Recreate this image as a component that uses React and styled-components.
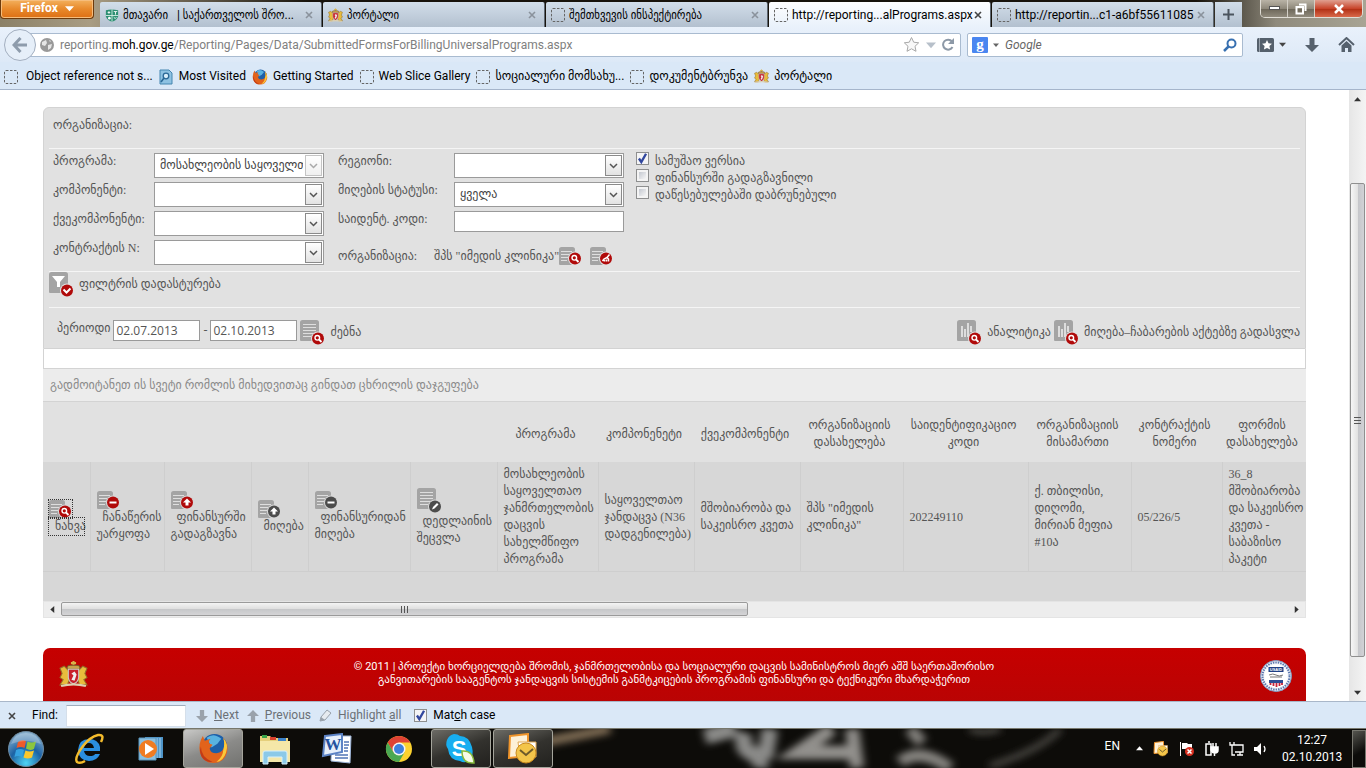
import React from 'react'

import styled, { createGlobalStyle } from 'styled-components';

const GlobalStyle = createGlobalStyle`
  *{
    box-sizing:border-box;
  }
  body{
    margin:0;
    background-color:#fff;
  }
  button,input,select{
    font:inherit;
    color:inherit;
    margin:0;
  }
  button{
    padding:0;
    border:0;
    background:none;
    cursor:pointer;
  }
  svg{
    display:block;
    flex:none;
  }
`;

const uiFont = `Roboto,"DejaVu Sans",sans-serif`;
const tabFont = `Roboto,"DejaVu Sans Condensed",sans-serif`;
const pageFont = `"Liberation Serif","DejaVu Sans",serif`;

const Screen=styled.div`
  display:flex;
  flex-direction:column;
  height:100vh;
  overflow:hidden;
  font-family:${uiFont};
  font-size:12px;
  line-height:17px;
  color:#000;
  white-space:nowrap;
`;

/* ---------- browser top ---------- */

const TitleBar=styled.header`
  flex:none;
  display:flex;
  align-items:flex-start;
  height:27px;
  background:
    linear-gradient(90deg,#8b8067 0,#a99d84 90px,transparent 310px),
    linear-gradient(270deg,#a8a494 0,#8f8a7c 90px,transparent 170px),
    #17130c;
`;

const FirefoxButton=styled.button`
  width:94px;
  height:19px;
  margin-right:6px;
  padding-bottom:2px;
  border:1px solid #6d3a0b;
  border-top:0;
  border-radius:0 0 4px 4px;
  background:linear-gradient(#f3b05d,#e8892b 50%,#dd6f14);
  box-shadow:inset 0 0 0 1px #f6bd7c;
  color:#fff;
  font-weight:bold;
  line-height:16px;
  display:flex;
  align-items:center;
  justify-content:center;
  gap:7px;
`;

const Tabs=styled.nav`
  flex:1;
  display:flex;
  gap:1px;
  padding-top:2px;
  min-width:0;
  font-family:${tabFont};
`;

const Tab=styled.div`
  flex:0 1 222px;
  height:25px;
  min-width:0;
  display:flex;
  align-items:center;
  padding:1px 6px 0 5px;
  border-radius:2px 2px 0 0;
  border-right:1px solid #5d6670;
  background:${({active}) => active ? 'linear-gradient(#fdfeff,#e9f1fb)' : 'linear-gradient(#d2deea,#b3c0cf)'};
`;

const TabTitle=styled.button`
  flex:1;
  min-width:0;
  display:flex;
  align-items:center;
  gap:4px;
  text-align:left;
  overflow:hidden;
  white-space:pre;
`;

const TabClose=styled.button`
  width:10px;
  height:10px;
`;

const NewTab=styled.button`
  width:27px;
  height:25px;
  display:flex;
  align-items:center;
  justify-content:center;
  background:linear-gradient(#d2deea,#b3c0cf);
`;

const WindowButtons=styled.div`
  display:flex;
  height:18px;
  margin-right:3px;
  border:1px solid #e0ddd5;
  border-top:0;
  border-radius:0 0 5px 5px;
  overflow:hidden;
`;

const WindowButton=styled.button`
  width:${({close}) => close ? 47 : 27}px;
  display:flex;
  align-items:center;
  justify-content:center;
  border-right:${({close}) => close ? 0 : '1px solid #d3cfc6'};
  background:${({close}) => close ? 'linear-gradient(#e0a090,#c8452b 50%,#b02d12 51%,#d8694a)' : 'linear-gradient(#b9b3a6,#8f897b 50%,#6b6557 51%,#918b7d)'};
`;

const NavBar=styled.div`
  flex:none;
  display:flex;
  align-items:center;
  height:35px;
  padding:0 11px 0 4px;
  background:linear-gradient(#e9f1fb,#dde9f7);
`;

const BackButton=styled.button`
  position:relative;
  width:32px;
  height:32px;
  border-radius:50%;
  border:1px solid #a3afc0;
  background:#e6eff9;
  display:flex;
  align-items:center;
  justify-content:center;
`;

const UrlBar=styled.div`
  flex:1;
  display:flex;
  align-items:center;
  gap:6px;
  height:24px;
  margin-left:-8px;
  padding:0 5px 0 11px;
  border:1px solid #a9bbd0;
  border-radius:2px;
  background:#fff;
`;

const UrlText=styled.div`
  flex:1;
  padding-top:2px;
  color:#808080;
  b{
    font-weight:normal;
    color:#000;
  }
`;

const SearchBar=styled.div`
  display:flex;
  align-items:center;
  width:276px;
  height:24px;
  margin:0 14px 0 6px;
  padding:0 5px 0 4px;
  border:1px solid #a9bbd0;
  border-radius:2px;
  background:#fff;
  gap:5px;
`;

const SearchInput=styled.input`
  flex:1;
  min-width:0;
  border:0;
  outline:0;
  padding:2px 0 0 1px;
  background:none;
  &::placeholder{
    color:#666;
    font-style:italic;
    opacity:1;
  }
`;

const NavIcons=styled.div`
  display:flex;
  align-items:center;
  gap:19px;
`;

const IconButton=styled.button`
  display:flex;
  align-items:center;
  gap:5px;
`;

const Bookmarks=styled.nav`
  flex:none;
  display:flex;
  align-items:center;
  gap:6px;
  height:28px;
  padding:2px 4px 0;
  background:#dae8f7;
  border-bottom:1px solid #a5b5cb;
`;

const Bookmark=styled.a`
  display:flex;
  align-items:center;
  gap:${({wide}) => wide ? 8 : 5}px;
  color:#000;
  text-decoration:none;
`;

/* ---------- page ---------- */

const Viewport=styled.div`
  flex:1;
  min-height:0;
  display:flex;
  background:#fff;
`;

const Page=styled.main`
  flex:1;
  min-width:0;
  overflow:hidden;
  padding:17px 43px 0;
  font-family:${pageFont};
  color:#555;
`;

const FilterPanel=styled.section`
  padding:0 5px;
  border:1px solid #d3d3d3;
  border-radius:6px 6px 0 0;
  background:#e1e1e1;
`;

const PanelRow=styled.div`
  display:flex;
  border-bottom:${({last}) => last ? 0 : '1px solid #f5f5f5'};
`;

const Heading=styled.div`
  height:40px;
  padding:9px 4px;
`;

const Filters=styled.form`
  display:flex;
  height:122px;
  padding:4px 4px 0;
`;

const Fields=styled.div`
  display:grid;
  grid-template-columns:${({label}) => label}px 170px;
  grid-auto-rows:25px;
  gap:4px 0;
  margin-right:${({gap}) => gap}px;
`;

const FieldLabel=styled.label`
  line-height:16px;
`;

const SelectBox=styled.div`
  position:relative;
  height:25px;
`;

const Select=styled.select`
  width:100%;
  height:25px;
  padding:0 20px 0 5px;
  appearance:none;
  border:1px solid #9a9a9a;
  border-radius:0;
  background:#fff;
  color:#444;
  opacity:1;
`;

const SelectArrow=styled.span`
  position:absolute;
  top:2px;
  right:2px;
  width:17px;
  height:21px;
  display:flex;
  align-items:center;
  justify-content:center;
  border:1px solid #8a8a8a;
  background:linear-gradient(#fff,#e2e2e2);
  opacity:${({off}) => off ? 0.5 : 1};
  pointer-events:none;
`;

const TextInput=styled.input`
  width:${({date}) => date ? '87px' : '100%'};
  height:21px;
  padding:0 2px;
  border:1px solid #9a9a9a;
  border-radius:0;
  background:#fff;
  font-family:"Open Sans",sans-serif;
`;

const OrgRow=styled.div`
  grid-column:1 / 3;
  display:flex;
  align-items:center;
  padding-top:7px;
`;

const OrgLabel=styled.span`
  width:96px;
`;

const OrgIcons=styled.div`
  display:flex;
  gap:8px;
`;

const Checks=styled.div`
  display:flex;
  flex-direction:column;
  margin-top:-1px;
`;

const CheckLabel=styled.label`
  display:flex;
  gap:6px;
  height:17px;
  line-height:19px;
`;

const CheckBox=styled.input`
  flex:none;
  appearance:none;
  width:13px;
  height:13px;
  border:1px solid #8e8f8f;
  background:linear-gradient(135deg,#c4c8d0,#f6f6f6) content-box,#f4f4f4;
  padding:2px;
  &:checked{
    background:url("data:image/svg+xml,%3Csvg xmlns='http://www.w3.org/2000/svg' viewBox='0 0 11 11'%3E%3Cpath d='M2.5 5.5 4.5 8.5 8.5 1.5' fill='none' stroke='%2331479e' stroke-width='2'/%3E%3C/svg%3E") border-box #f4f4f6;
  }
`;

const Confirm=styled.div`
  height:35px;
`;

const ActionButton=styled.button`
  display:flex;
  align-items:center;
  gap:5px;
`;

const SearchRow=styled.form`
  flex:1;
  display:flex;
  align-items:flex-start;
  height:40px;
  padding:12px 0 0 8px;
  gap:3px;
`;

const Dash=styled.span`
  line-height:21px;
`;

const Spacer=styled.div`
  flex:1;
`;

const WhiteStrip=styled.div`
  height:20px;
  border:1px solid #d3d3d3;
  border-top:0;
  background:#fff;
`;

const GroupPanel=styled.div`
  height:33px;
  padding:8px 7px;
  border-bottom:1px solid #d3d3d3;
  background:#ececec;
  color:#8a8a8a;
`;

const Grid=styled.div`
  overflow:hidden;
  background:#d7d7d7;
  padding-bottom:29px;
`;

const Table=styled.table`
  width:100%;
  table-layout:fixed;
  border-collapse:collapse;
`;

const Th=styled.th`
  height:60px;
  padding:4px 4px 0 0;
  background:#e1e1e1;
  font-weight:normal;
`;

const Td=styled.td`
  height:109px;
  padding:2px 0 0 6px;
  border-right:1px solid #cecece;
  border-bottom:1px solid #cecece;
  &:last-child{
    border-right:0;
  }
`;

const RowAction=styled.a`
  display:block;
  color:inherit;
  text-decoration:none;
`;

const ActionText=styled.span`
  display:block;
  text-indent:6px;
  width:${({focused}) => focused ? '35px' : 'auto'};
  outline:${({focused}) => focused ? '1px dotted #333' : 'none'};
`;

const ActionIcon=styled.span`
  display:block;
  width:23px;
  outline:${({focused}) => focused ? '1px dotted #333' : 'none'};
`;

const HScroll=styled.div`
  display:flex;
  align-items:center;
  height:17px;
  padding:0 5px;
  border:1px solid #e4e4e4;
  background:#ededed;
`;

const HTrack=styled.div`
  flex:1;
  margin:0 5px;
`;

const HThumb=styled.div`
  width:56%;
  height:14px;
  display:flex;
  align-items:center;
  justify-content:center;
  border:1px solid #9a9a9a;
  border-radius:2px;
  background:linear-gradient(#f4f4f4,#dedede 50%,#c6c7c9 51%,#d4d4d6);
`;

const PageFooter=styled.footer`
  display:flex;
  justify-content:space-between;
  height:60px;
  margin-top:30px;
  padding:12px 14px 0 16px;
  border-radius:7px 7px 0 0;
  background:linear-gradient(#c60000,#b80404);
  color:#fff;
  text-align:center;
  font-family:${uiFont};
  font-size:11px;
  line-height:13px;
`;

const VScroll=styled.div`
  width:17px;
  display:flex;
  flex-direction:column;
  align-items:center;
  padding:6px 0 5px;
  background:linear-gradient(90deg,#e6e6e6,#f4f4f4);
`;

const VThumb=styled.div`
  width:15px;
  height:79%;
  margin-top:80px;
  margin-bottom:auto;
  display:flex;
  align-items:center;
  justify-content:center;
  border:1px solid #8f8f8f;
  border-radius:2px;
  background:linear-gradient(90deg,#f6f6f6,#e2e2e2 50%,#c4c5c9 51%,#d2d2d6);
`;

/* ---------- find bar and taskbar ---------- */

const FindBar=styled.div`
  flex:none;
  display:flex;
  align-items:center;
  height:27px;
  padding:1px 0 0 8px;
  border-top:1px solid #a9b7c9;
  background:#dae8f7;
`;

const FindLabel=styled.label`
  width:50px;
  padding-left:16px;
`;

const FindInput=styled.input`
  width:120px;
  height:22px;
  margin-right:10px;
  border:1px solid #d5dfea;
  border-top-color:#9fadbd;
  background:#fff;
`;

const FindButton=styled.button`
  display:flex;
  align-items:center;
  gap:6px;
  margin-right:8px;
  color:#6b7076;
`;

const FindCheck=styled.label`
  display:flex;
  align-items:center;
  gap:6px;
  margin-left:5px;
`;

const TaskBar=styled.footer`
  flex:none;
  position:relative;
  display:flex;
  height:40px;
  border-top:1px solid #77776c;
  background:#0d0c09;
  color:#fff;
`;

const Wallpaper=styled.svg`
  position:absolute;
  left:0;
  top:0;
  width:100%;
  height:100%;
`;

const TaskItems=styled.div`
  position:relative;
  display:flex;
  gap:2px;
  flex:1;
`;

const StartButton=styled.button`
  width:57px;
  padding-left:7px;
`;

const TaskButton=styled.button`
  width:60px;
  height:39px;
  display:flex;
  align-items:center;
  justify-content:center;
  border-radius:3px;
  border:1px solid ${({state}) => state ? '#a5a59c' : 'transparent'};
  background:${({state}) => state === 'active' ? 'linear-gradient(160deg,#c8c8c6,#8b8b89 50%,#72726f)' : state === 'open' ? 'linear-gradient(160deg,#6c6b65,#33322e 50%,#22211e)' : 'none'};
`;

const Tray=styled.div`
  position:relative;
  display:flex;
  align-items:center;
  gap:10px;
`;

const Lang=styled.span`
  margin-right:6px;
  padding-bottom:4px;
`;

const Clock=styled.time`
  width:60px;
  margin-left:5px;
  text-align:center;
`;

const ShowDesktop=styled.button`
  width:14px;
  height:38px;
  border:1px solid #77776f;
  background:linear-gradient(150deg,#55554f,#0c0c0a 60%);
`;

/* ---------- icons ---------- */

const EmptyIcon = () => (
  <svg width="14" height="14" viewBox="0 0 14 14">
    <rect x="0.5" y="0.5" width="13" height="13" rx="1.5" fill="none" stroke="#666" strokeDasharray="2.5 1.5" />
  </svg>
)

const ArmsIcon = ({ size = 15 }) => (
  <svg width={size} height={size} viewBox="0 0 28 26">
    <path d="M14 0v5M11.500 2h5" stroke="#d9b24a" strokeWidth="2" />
    <path d="M8 8q-1-4 3-4h6q4 0 3 4z" fill="#c9a24a" stroke="#76542a" />
    <path d="M1 7l4-2 4 4 1 9-2 5H1l3-5-3-2 2-4z" fill="#e8bc3c" stroke="#94702c" />
    <path d="M27 7l-4-2-4 4-1 9 2 5h7l-3-5 3-2-2-4z" fill="#e8bc3c" stroke="#94702c" />
    <path d="M9 8h10v8q-1 5-5 6-4-1-5-6z" fill="#c8202a" stroke="#ccc" />
    <path d="M12 18l2-4-2-2 3-2 2 3-2 6z" fill="#eee" />
    <path d="M2 24q12-3 24 0" fill="none" stroke="#ddd0b0" strokeWidth="2" />
  </svg>
)

const MinistryIcon = () => (
  <svg width="14" height="15" viewBox="0 0 16 16">
    <path d="M1 2q6-2 14 0v7q-2 5-7 6-5-1-7-6z" fill="#2c8f72" />
    <path d="M8 1v14M1 8h14" stroke="#d7efe6" />
    <path d="M3 4.500h3M4.500 3v3M10 3.500h4M12 4v3" stroke="#fff" />
    <circle cx="5" cy="11" r="1.500" fill="#fff" />
    <path d="M10 10q2 3 3 0" stroke="#fff" fill="none" />
  </svg>
)

const FirefoxIcon = ({ size }) => (
  <svg width={size} height={size} viewBox="0 0 32 32">
    <circle cx="17" cy="14" r="13" fill="#1d5fa8" />
    <path d="M9 5q7-6 15 1l-4 5-6 4z" fill="#59b2e0" />
    <path d="M26 5q6 7 4 15-3 11-14 11Q5 31 2 20 0 11 5 3l2 5 6-2q-3 3-1 5l3 1-3 4q1 5 7 5 7-1 8-7 1-5-1-9z" fill="#e2631b" />
    <path d="M26 5q6 7 3 15-3 9-10 10 7-6 7-12 2-7 0-13z" fill="#fbc93a" />
    <path d="M3 14q0 11 12 16Q3 30 2 18z" fill="#c23b17" />
  </svg>
)

const MostVisitedIcon = () => (
  <svg width="15" height="16" viewBox="0 0 15 16">
    <path d="M1 1h9l3 3v11H1z" fill="#8ec2e2" stroke="#4586b0" />
    <circle cx="7" cy="7" r="2.800" fill="#d8eefa" stroke="#2a6896" strokeWidth="1.300" />
    <path d="M5 9l-3 4" stroke="#2a6896" strokeWidth="1.600" />
  </svg>
)

const CloseIcon = ({ color = '#8a929c' }) => (
  <svg width="8" height="8" viewBox="0 0 8 8">
    <path d="M1 1l6 6M7 1L1 7" stroke={color} strokeWidth="1.600" />
  </svg>
)

const Triangle = ({ dir = 'down', color = '#333', w = 7 }) => {
  const turn = { down: 0, up: 180, left: 90, right: 270 }
  return (
    <svg width={w} height={w} viewBox="0 0 8 8">
      <path d="M0 2h8L4 6.500z" fill={color} transform={`rotate(${turn[dir]} 4 4)`} />
    </svg>
  )
}

const ArrowIcon = ({ up, color = '#9aa2ab', size = 14 }) => (
  <svg width={size} height={size} viewBox="0 0 14 14">
    <path d="M4.500 0h5v7H14l-7 7-7-7h4.500z" fill={color} transform={up ? 'rotate(180 7 7)' : undefined} />
  </svg>
)

const glyphs = {
  search: <g fill="none" stroke="#fff"><circle cx="-0.700" cy="-0.700" r="2.300" strokeWidth="1.400" /><path d="M1 1l2.500 2.500" strokeWidth="1.800" /></g>,
  clear: <path d="M3.500-4L1-1M-3.500 2.500L-2 .5 1-1l1.500 1.500V3M.5 1v2M-1.500 1.500V3" fill="none" stroke="#fff" strokeWidth="1.500" />,
  minus: <path d="M-3.500 0h7" stroke="#fff" strokeWidth="2" />,
  up: <path d="M0-4l4 4H1.500v3h-3V0H-4z" fill="#fff" />,
  check: <path d="M-3.500-1L-.5 2l4-4" fill="none" stroke="#fff" strokeWidth="2" />,
  edit: <path d="M-3 3l1-2.500L2-3.500 3.500-2-.5 2z" fill="#fff" />,
}

const DocIcon = ({ kind = 'doc', badge, color = '#b00a0a', big, bg = '#e1e1e1' }) => {
  const [w, h] = big ? [25, 25] : [23, 18]
  const dh = big ? 21 : 18
  const dw = big ? 19 : 16
  const [cx, cy] = big ? [18, 18.500] : [16, 11.500]
  return (
    <svg width={w} height={h} viewBox={`0 0 ${w} ${h}`}>
      <path d={`M2.500 0H${dw - 2.500}q2.500 0 2.500 2.500V${dh - 1}q0 1-1 1H1q-1 0-1-1V2.500Q0 0 2.500 0z`} fill="#a4a4a4" />
      {kind === 'doc' && <path d={big ? 'M3 4.500h13M3 7.500h13M3 10.500h13M3 13.500h10M3 16.500h8' : 'M2 4.500h11M2 7.500h8M2 10.500h7M2 13.500h6'} stroke="#dedede" />}
      {kind === 'chart' && <path d="M5 6v11M8 9v8M11 3v14M14 6v6" stroke="#efefef" strokeWidth="1.500" />}
      {kind === 'filter' && <path d="M3 4h13l-5 6v5H8v-5z" fill="#fff" />}
      <circle cx={cx} cy={cy} r="7" fill={bg} />
      <circle cx={cx} cy={cy} r="6" fill={color} />
      <g transform={`translate(${cx} ${cy})`}>{glyphs[badge]}</g>
    </svg>
  )
}

const UsaidIcon = () => (
  <svg width="32" height="32" viewBox="0 0 32 32">
    <circle cx="16" cy="16" r="15.500" fill="#f4f6fa" stroke="#7f95bd" />
    <circle cx="16" cy="16" r="13.500" fill="none" stroke="#5c78ae" strokeWidth="2" strokeDasharray="1.500 1" />
    <circle cx="16" cy="16" r="11.500" fill="#fff" />
    <path d="M8.500 7h15v5h-15z" fill="#1f3f83" />
    <text x="16" y="11" fontFamily="Liberation Sans" fontSize="4" fontWeight="bold" textAnchor="middle" fill="#fff">USAID</text>
    <path d="M9 15q4-2 7 0t7 0M10 17h12" fill="none" stroke="#777" />
    <path d="M9 20h14v3H9z" fill="#2c4c93" />
    <path d="M10.500 23v2M13.500 23v3M16.500 23v4M19.500 23v3M22 23v2" stroke="#c8233a" strokeWidth="1.800" />
  </svg>
)

const Grip = ({ vertical }) => (
  <svg width="9" height="9" viewBox="0 0 9 9">
    <path d="M1.500 1v7M4.500 1v7M7.500 1v7" stroke="#555" transform={vertical ? 'rotate(90 4.500 4.500)' : undefined} />
  </svg>
)

const Orb = () => (
  <svg width="38" height="38" viewBox="0 0 38 38">
    <defs>
      <radialGradient id="orb" cx="0.5" cy="0.9" r="0.9">
        <stop offset="0" stopColor="#4fd4f4" />
        <stop offset="0.5" stopColor="#1c62a4" />
        <stop offset="1" stopColor="#8db4d0" />
      </radialGradient>
    </defs>
    <circle cx="19" cy="19" r="17.500" fill="url(#orb)" stroke="#6e8ba0" />
    <path d="M11 12q4-3 8-1l-1.500 7q-4-2-8 0z" fill="#ee5a2a" />
    <path d="M20.500 11.500q4 2 8.500 0l-2 7.500q-4 2-8-.5z" fill="#8cc63f" />
    <path d="M9 20q4-2 8 0l-2 7q-4-2-7.500 0z" fill="#36a2e0" />
    <path d="M18.500 20.500q4 2 8.500 0l-2 7q-4 2-8.500 0z" fill="#fcc82c" />
    <path d="M4 14Q8 3 19 3t15 11q-15-6-30 0z" fill="#fff" opacity="0.25" />
  </svg>
)

const IeIcon = () => (
  <svg width="34" height="34" viewBox="0 0 34 34">
    <path d="M17 7q9 0 11 8v4H12q1 5 6 5 4 0 5-2h5q-3 7-11 7-10 0-11-11Q7 7 17 7zm-5 9h10q-1-5-5-5t-5 5z" fill="#2a8ee0" />
    <path d="M29 10q4-8-3-7-8 2-15 11Q2 26 5 30q3 2 8-1" fill="none" stroke="#f3bb2c" strokeWidth="2.500" />
  </svg>
)

const MediaIcon = () => (
  <svg width="28" height="28" viewBox="0 0 28 28">
    <path d="M8 2h18v21H8z" fill="#4e95c8" />
    <path d="M23 3v20M20 3v20" stroke="#a7d2ee" />
    <path d="M2 3h17v22H2z" fill="#8bc0e0" stroke="#5a96be" />
    <circle cx="11" cy="14" r="9" fill="#f07c22" />
    <path d="M8 8l9 6-9 6z" fill="#fff" />
  </svg>
)

const ExplorerIcon = () => (
  <svg width="34" height="32" viewBox="0 0 34 32">
    <path d="M2 3h10l2 2h16v23H2z" fill="#e5cf7c" />
    <path d="M4 2h5v3H4z" fill="#3aa54a" />
    <path d="M12 4h6v3h-6z" fill="#d8402c" />
    <path d="M20 5h8v3h-8z" fill="#3c82c8" />
    <path d="M2 8h30v21H2z" fill="#f5e7a8" />
    <path d="M5 31V20q0-2 2-2h20q2 0 2 2v11h-5v-7H10v7z" fill="#8cc9e8" stroke="#d8f0fb" />
  </svg>
)

const WordIcon = () => (
  <svg width="32" height="32" viewBox="0 0 32 32">
    <path d="M11 3h19l-1 27-19-2z" fill="#fff" stroke="#9db5d8" />
    <path d="M14 22h13M14 25h13M23 9h5M23 12h5M23 15h4M23 18h4" stroke="#5276b5" strokeWidth="1.500" />
    <path d="M4 3L21 1v18L2 23z" fill="#e6effa" stroke="#5c83c5" strokeWidth="2" />
    <text x="12" y="17" fontFamily="Liberation Serif" fontSize="17" fontWeight="bold" textAnchor="middle" fill="#24529f">W</text>
  </svg>
)

const ChromeIcon = () => (
  <svg width="28" height="28" viewBox="0 0 28 28">
    <circle cx="14" cy="14" r="13" fill="#fcd22f" />
    <path d="M2.700 7.500A13 13 0 0 1 25.300 7.500H14L8.400 17.200z" fill="#df4234" />
    <path d="M2.700 7.500A13 13 0 0 0 14 27l5.600-9.800H8.400z" fill="#4aa853" />
    <circle cx="14" cy="14" r="6.500" fill="#f4f4f4" />
    <circle cx="14" cy="14" r="5" fill="#3f80dd" />
  </svg>
)

const SkypeIcon = () => (
  <svg width="32" height="32" viewBox="0 0 32 32">
    <path d="M9 1q4 0 6 2 9 0 12 11 2 8-2 13-5 4-10 1Q4 27 3 16 0 12 2 7q2-5 7-6z" fill="#18aef0" />
    <text x="14" y="23" fontFamily="Liberation Sans" fontSize="22" fontWeight="bold" textAnchor="middle" fill="#fff">S</text>
    <path d="M17 18q11-1 12 12-12 1-12-12z" fill="#f6fbe8" stroke="#86b93a" strokeWidth="1.500" />
  </svg>
)

const OutlookIcon = ({ size = 32 }) => (
  <svg width={size} height={size} viewBox="0 0 32 32">
    <path d="M3 3l18-2v22L2 25z" fill="#fdf1d8" stroke="#f0952b" strokeWidth="2" />
    <path d="M11 9h18v15H13z" fill="#fff" stroke="#e0a955" />
    <circle cx="19" cy="20" r="10" fill="#f3c54a" stroke="#c98a1d" />
    <path d="M13 17l6 5 7-6" fill="none" stroke="#6d5a2a" strokeWidth="2" />
  </svg>
)

/* ---------- data ---------- */

const tabs = [
  { title: 'მთავარი   | საქართველოს შრო...', icon: <MinistryIcon /> },
  { title: 'პორტალი', icon: <ArmsIcon /> },
  { title: 'შემთხვევის ინსპექტირება', icon: <EmptyIcon /> },
  { title: 'http://reporting...alPrograms.aspx', icon: <EmptyIcon />, active: true },
  { title: 'http://reportin...c1-a6bf55611085', icon: <EmptyIcon /> },
]

const bookmarks = [
  { title: 'Object reference not s...', icon: <EmptyIcon />, wide: true },
  { title: 'Most Visited', icon: <MostVisitedIcon /> },
  { title: 'Getting Started', icon: <FirefoxIcon size={16} /> },
  { title: 'Web Slice Gallery', icon: <EmptyIcon /> },
  { title: 'სოციალური მომსახუ...', icon: <EmptyIcon /> },
  { title: 'დოკუმენტბრუნვა', icon: <EmptyIcon /> },
  { title: 'პორტალი', icon: <ArmsIcon /> },
]

const actions = [
  { lines: ['ნახვა'], badge: 'search', focused: true },
  { lines: ['ჩანაწერის', 'უარყოფა'], badge: 'minus' },
  { lines: ['ფინანსურში', 'გადაგზავნა'], badge: 'up' },
  { lines: ['მიღება'], badge: 'up', color: '#4c4c4c' },
  { lines: ['ფინანსურიდან', 'მიღება'], badge: 'minus', color: '#4c4c4c' },
  { lines: ['დედლაინის', 'შეცვლა'], badge: 'edit', color: '#4c4c4c', big: true },
]

const columns = [
  { head: ['პროგრამა'], cell: ['მოსახლეობის', 'საყოველთაო', 'ჯანმრთელობის', 'დაცვის', 'სახელმწიფო', 'პროგრამა'] },
  { head: ['კომპონენეტი'], cell: ['საყოველთაო', 'ჯანდაცვა (N36', 'დადგენილება)'] },
  { head: ['ქვეკომპონენტი'], cell: ['მშობიარობა და', 'საკეისრო კვეთა'] },
  { head: ['ორგანიზაციის', 'დასახელება'], cell: ['შპს "იმედის', 'კლინიკა"'] },
  { head: ['საიდენტიფიკაციო', 'კოდი'], cell: ['202249110'] },
  { head: ['ორგანიზაციის', 'მისამართი'], cell: ['ქ. თბილისი,', 'დიღომი,', 'მირიან მეფია', '#10ა'] },
  { head: ['კონტრაქტის', 'ნომერი'], cell: ['05/226/5'] },
  { head: ['ფორმის', 'დასახელება'], cell: ['36_8', 'მშობიარობა', 'და საკეისრო', 'კვეთა -', 'საბაზისო', 'პაკეტი'] },
]

const widths = [47, 74, 87, 57, 102, 87, 101, 96, 106, 103, 125, 103, 91, 84]

const Lines = ({ items }) => items.map((line, i) => (
  <React.Fragment key={i}>{i > 0 && <br />}{line}</React.Fragment>
))

const Dropdown = ({ id, value = '', disabled }) => (
  <SelectBox>
    <Select id={id} disabled={disabled}>
      <option>{value}</option>
    </Select>
    <SelectArrow off={disabled}>
      <svg width="9" height="6" viewBox="0 0 9 6"><path d="M1 1l3.500 3.500L8 1" fill="none" stroke="#555" strokeWidth="1.500" /></svg>
    </SelectArrow>
  </SelectBox>
)

const BrowserTop = () => (
  <>
    <TitleBar>
      <FirefoxButton>Firefox <Triangle color="#fff" w={9} /></FirefoxButton>
      <Tabs>
        {tabs.map((t) => (
          <Tab key={t.title} active={t.active}>
            <TabTitle>{t.icon}{t.title}</TabTitle>
            <TabClose aria-label="Close tab"><CloseIcon color={t.active ? '#444' : undefined} /></TabClose>
          </Tab>
        ))}
        <NewTab aria-label="New tab">
          <svg width="11" height="11" viewBox="0 0 11 11"><path d="M5.500 0v11M0 5.500h11" stroke="#4b545e" strokeWidth="2" /></svg>
        </NewTab>
      </Tabs>
      <WindowButtons>
        <WindowButton aria-label="Minimize"><svg width="11" height="5"><rect x="0.5" y="0.5" width="10" height="3" fill="#fff" stroke="#555" /></svg></WindowButton>
        <WindowButton aria-label="Restore"><svg width="12" height="12" viewBox="0 0 12 12"><path d="M4 1.500h6.500V8M1.500 4h6.500v6.500H1.500z" fill="none" stroke="#fff" strokeWidth="2" /></svg></WindowButton>
        <WindowButton close aria-label="Close"><svg width="12" height="10" viewBox="0 0 12 10"><path d="M2 1l8 8M10 1L2 9" stroke="#fff" strokeWidth="2.500" /></svg></WindowButton>
      </WindowButtons>
    </TitleBar>
    <NavBar>
      <BackButton aria-label="Back">
        <svg width="16" height="16" viewBox="0 0 16 16"><path d="M8.500 1L2 8l6.500 7M2.500 8H15" fill="none" stroke="#8e9cac" strokeWidth="3" /></svg>
      </BackButton>
      <UrlBar>
        <svg width="14" height="14" viewBox="0 0 14 14">
          <circle cx="7" cy="7" r="7" fill="#999" />
          <path d="M2 4l4-2 1 3-2 3-3-1zM8 7l4-1-1 4-3 2zM9 2l2 1-1 1z" fill="#e6e6e6" />
        </svg>
        <UrlText>reporting.<b>moh.gov.ge</b>/Reporting/Pages/Data/SubmittedFormsForBillingUniversalPrograms.aspx</UrlText>
        <svg width="17" height="17" viewBox="0 0 17 17"><path d="M8.500 1.500l2.200 4.700 5 .6-3.700 3.500 1 5-4.500-2.500L4 15.300l1-5L1.300 6.800l5-.6z" fill="#f8f8f8" stroke="#a9a9a9" /></svg>
        <Triangle w={10} color="#b7c0ca" />
        <svg width="13" height="13" viewBox="0 0 13 13"><path d="M10.500 9A5 5 0 1 1 10 3.500" fill="none" stroke="#8d99a7" strokeWidth="2" /><path d="M12 0v6H6z" fill="#8d99a7" /></svg>
      </UrlBar>
      <SearchBar>
        <svg width="16" height="16" viewBox="0 0 16 16">
          <rect width="16" height="16" rx="1" fill="#4a86f0" />
          <text x="8" y="12" fontFamily="Liberation Serif" fontSize="15" fontWeight="bold" textAnchor="middle" fill="#fff">g</text>
        </svg>
        <Triangle w={6} color="#666" />
        <SearchInput placeholder="Google" aria-label="Search" />
        <svg width="14" height="14" viewBox="0 0 14 14"><circle cx="8.500" cy="5.500" r="4" fill="none" stroke="#3870b0" strokeWidth="2" /><path d="M5.500 8.500L1 13" stroke="#3870b0" strokeWidth="2.500" /></svg>
      </SearchBar>
      <NavIcons>
        <IconButton aria-label="Bookmarks">
          <svg width="17" height="14" viewBox="0 0 17 14"><rect width="17" height="14" rx="1.500" fill="#55606c" /><path d="M2.500 0v14" stroke="#9aa3ad" /><path d="M10 2l1.500 3.300 3.500.4-2.600 2.400.7 3.500L10 9.900l-3.100 1.700.7-3.500L5 5.700l3.500-.4z" fill="#fff" /></svg>
          <Triangle color="#444" />
        </IconButton>
        <IconButton aria-label="Downloads"><ArrowIcon color="#56616d" size={14} /></IconButton>
        <IconButton aria-label="Home">
          <svg width="17" height="15" viewBox="0 0 17 15"><path d="M1 8l7.500-7L16 8" fill="none" stroke="#56616d" strokeWidth="2" /><path d="M3.500 8.500l5-4.500 5 4.500V15H10v-4H7v4H3.500z" fill="#56616d" /></svg>
        </IconButton>
      </NavIcons>
    </NavBar>
    <Bookmarks>
      {bookmarks.map((b) => (
        <Bookmark key={b.title} href="#" wide={b.wide}>{b.icon}{b.title}</Bookmark>
      ))}
    </Bookmarks>
  </>
)

const FilterForm = () => (
  <FilterPanel>
    <PanelRow><Heading>ორგანიზაცია:</Heading></PanelRow>
    <PanelRow>
      <Filters>
        <Fields label={101} gap={14}>
          <FieldLabel htmlFor="program">პროგრამა:</FieldLabel>
          <Dropdown id="program" value="მოსახლეობის საყოველთაო" disabled />
          <FieldLabel htmlFor="component">კომპონენტი:</FieldLabel>
          <Dropdown id="component" />
          <FieldLabel htmlFor="sub">ქვეკომპონენტი:</FieldLabel>
          <Dropdown id="sub" />
          <FieldLabel htmlFor="contract">კონტრაქტის N:</FieldLabel>
          <Dropdown id="contract" />
        </Fields>
        <Fields label={116} gap={12}>
          <FieldLabel htmlFor="region">რეგიონი:</FieldLabel>
          <Dropdown id="region" />
          <FieldLabel htmlFor="status">მიღების სტატუსი:</FieldLabel>
          <Dropdown id="status" value="ყველა" />
          <FieldLabel htmlFor="code">საიდენტ. კოდი:</FieldLabel>
          <TextInput id="code" />
          <OrgRow>
            <OrgLabel>ორგანიზაცია:</OrgLabel>
            <span>შპს "იმედის კლინიკა"</span>
            <OrgIcons>
              <IconButton type="button" aria-label="Find organization"><DocIcon badge="search" /></IconButton>
              <IconButton type="button" aria-label="Clear organization"><DocIcon badge="clear" /></IconButton>
            </OrgIcons>
          </OrgRow>
        </Fields>
        <Checks>
          <CheckLabel><CheckBox type="checkbox" defaultChecked />სამუშაო ვერსია</CheckLabel>
          <CheckLabel><CheckBox type="checkbox" />ფინანსურში გადაგზავნილი</CheckLabel>
          <CheckLabel><CheckBox type="checkbox" />დაწესებულებაში დაბრუნებული</CheckLabel>
        </Checks>
      </Filters>
    </PanelRow>
    <PanelRow>
      <Confirm>
        <ActionButton><DocIcon kind="filter" badge="check" big />ფილტრის დადასტურება</ActionButton>
      </Confirm>
    </PanelRow>
    <PanelRow last>
      <SearchRow>
        <label htmlFor="from">პერიოდი</label>
        <TextInput date id="from" defaultValue="02.07.2013" />
        <Dash>-</Dash>
        <TextInput date aria-label="To" defaultValue="02.10.2013" />
        <ActionButton type="button"><DocIcon badge="search" big />ძებნა</ActionButton>
        <Spacer />
        <ActionButton type="button"><DocIcon kind="chart" badge="search" big />ანალიტიკა</ActionButton>
        <ActionButton type="button"><DocIcon kind="chart" badge="search" big />მიღება–ჩაბარების აქტებზე გადასვლა</ActionButton>
      </SearchRow>
    </PanelRow>
  </FilterPanel>
)

const DataGrid = () => (
  <>
    <Grid>
      <Table>
        <colgroup>{widths.map((w, i) => <col key={i} width={w} />)}</colgroup>
        <thead>
          <tr>
            {actions.map((a) => <Th key={a.lines.join()} />)}
            {columns.map((c, i) => <Th key={i}><Lines items={c.head} /></Th>)}
          </tr>
        </thead>
        <tbody>
          <tr>
            {actions.map((a) => (
              <Td key={a.lines.join()}>
                <RowAction href="#">
                  <ActionIcon focused={a.focused}><DocIcon badge={a.badge} color={a.color} big={a.big} bg="#d7d7d7" /></ActionIcon>
                  <ActionText focused={a.focused}><Lines items={a.lines} /></ActionText>
                </RowAction>
              </Td>
            ))}
            {columns.map((c, i) => <Td key={i}><Lines items={c.cell} /></Td>)}
          </tr>
        </tbody>
      </Table>
    </Grid>
    <HScroll>
      <Triangle dir="left" />
      <HTrack><HThumb><Grip /></HThumb></HTrack>
      <Triangle dir="right" />
    </HScroll>
  </>
)

const Bottom = () => (
  <>
    <FindBar>
      <IconButton aria-label="Close find bar"><CloseIcon color="#444" /></IconButton>
      <FindLabel htmlFor="find">Find:</FindLabel>
      <FindInput id="find" />
      <FindButton><ArrowIcon size={12} /><span><u>N</u>ext</span></FindButton>
      <FindButton><ArrowIcon size={12} up /><span><u>P</u>revious</span></FindButton>
      <FindButton>
        <svg width="13" height="13" viewBox="0 0 13 13"><path d="M1 12l1-4 6-7 4 3-6 7z" fill="#e6ebf0" stroke="#98a1ab" /><path d="M2 8l4 3-5 1z" fill="#98a1ab" /></svg>
        <span>Highlight <u>a</u>ll</span>
      </FindButton>
      <FindCheck><CheckBox type="checkbox" defaultChecked /><span>Mat<u>c</u>h case</span></FindCheck>
    </FindBar>
    <TaskBar>
      <Wallpaper viewBox="0 0 1366 40" preserveAspectRatio="none">
        <defs><filter id="soft" x="-20%" y="-50%" width="140%" height="200%"><feGaussianBlur stdDeviation="4" /></filter></defs>
        <g filter="url(#soft)" fill="none">
          <path d="M540 14L610 0" stroke="#7d6a52" strokeWidth="10" />
          <path d="M705 8l30-8M745 4q-5 14 5 20 12 4 10 16M770 0l-5 30" stroke="#8a8a88" strokeWidth="16" />
          <path d="M832 0l-34 24h60M852 0l5 40" stroke="#92908c" strokeWidth="14" />
          <path d="M910 0l12 14M900 34q20-16 50 6" stroke="#85837f" strokeWidth="12" />
          <path d="M970 0q10 6 30 0M1060 0q-20 22-70 38" stroke="#4c4944" strokeWidth="6" />
        </g>
      </Wallpaper>
      <TaskItems>
        <StartButton aria-label="Start"><Orb /></StartButton>
        <TaskButton aria-label="Internet Explorer"><IeIcon /></TaskButton>
        <TaskButton aria-label="Media Player"><MediaIcon /></TaskButton>
        <TaskButton aria-label="Firefox" state="active"><FirefoxIcon size={31} /></TaskButton>
        <TaskButton aria-label="Explorer"><ExplorerIcon /></TaskButton>
        <TaskButton aria-label="Word"><WordIcon /></TaskButton>
        <TaskButton aria-label="Chrome"><ChromeIcon /></TaskButton>
        <TaskButton aria-label="Skype" state="open"><SkypeIcon /></TaskButton>
        <TaskButton aria-label="Outlook" state="open"><OutlookIcon /></TaskButton>
      </TaskItems>
      <Tray>
        <Lang>EN</Lang>
        <Triangle dir="up" color="#fff" />
        <OutlookIcon size={16} />
        <svg width="16" height="16" viewBox="0 0 16 16"><path d="M1.500 1v14" stroke="#fff" /><path d="M3 2h5l1 1h4v6H8L7 8H3z" fill="#fff" /><circle cx="10.500" cy="10.500" r="4.500" fill="#d83020" /><path d="M8.500 8.500l4 4M12.500 8.500l-4 4" stroke="#fff" strokeWidth="1.500" /></svg>
        <svg width="14" height="16" viewBox="0 0 14 16"><path d="M1 3h5v11H1zM3 1h2" fill="none" stroke="#fff" strokeWidth="1.500" /><path d="M6 6h7v3q0 3-3 3t-4-3zM8 2v4M11 2v4M9.500 12v3" fill="#fff" stroke="#fff" strokeWidth="1.500" /></svg>
        <svg width="15" height="15" viewBox="0 0 15 15"><path d="M5 4h9v7H6M8 14h6M11 11v3M1 1v3h4V1M3 4v10h3" fill="none" stroke="#fff" strokeWidth="1.300" /></svg>
        <svg width="13" height="14" viewBox="0 0 13 14"><path d="M0 5h3l4-4v12L3 9H0z" fill="#fff" /><path d="M10 4q2 3 0 6" fill="none" stroke="#fff" strokeWidth="1.300" /></svg>
        <Clock>12:27<br />02.10.2013</Clock>
        <ShowDesktop aria-label="Show desktop" />
      </Tray>
    </TaskBar>
  </>
)

const App = () => {
  return (
    <Screen>
      <GlobalStyle />
      <BrowserTop />
      <Viewport>
        <Page>
          <FilterForm />
          <WhiteStrip />
          <GroupPanel>გადმოიტანეთ ის სვეტი რომლის მიხედვითაც გინდათ ცხრილის დაჯგუფება</GroupPanel>
          <DataGrid />
          <PageFooter>
            <ArmsIcon size={29} />
            <div>
              © 2011 | პროექტი ხორციელდება შრომის, ჯანმრთელობისა და სოციალური დაცვის სამინისტროს მიერ აშშ საერთაშორისო<br />
              განვითარების სააგენტოს ჯანდაცვის სისტემის განმტკიცების პროგრამის ფინანსური და ტექნიკური მხარდაჭერით
            </div>
            <UsaidIcon />
          </PageFooter>
        </Page>
        <VScroll>
          <Triangle dir="up" />
          <VThumb><Grip vertical /></VThumb>
          <Triangle />
        </VScroll>
      </Viewport>
      <Bottom />
    </Screen>
  )
}

export default App
